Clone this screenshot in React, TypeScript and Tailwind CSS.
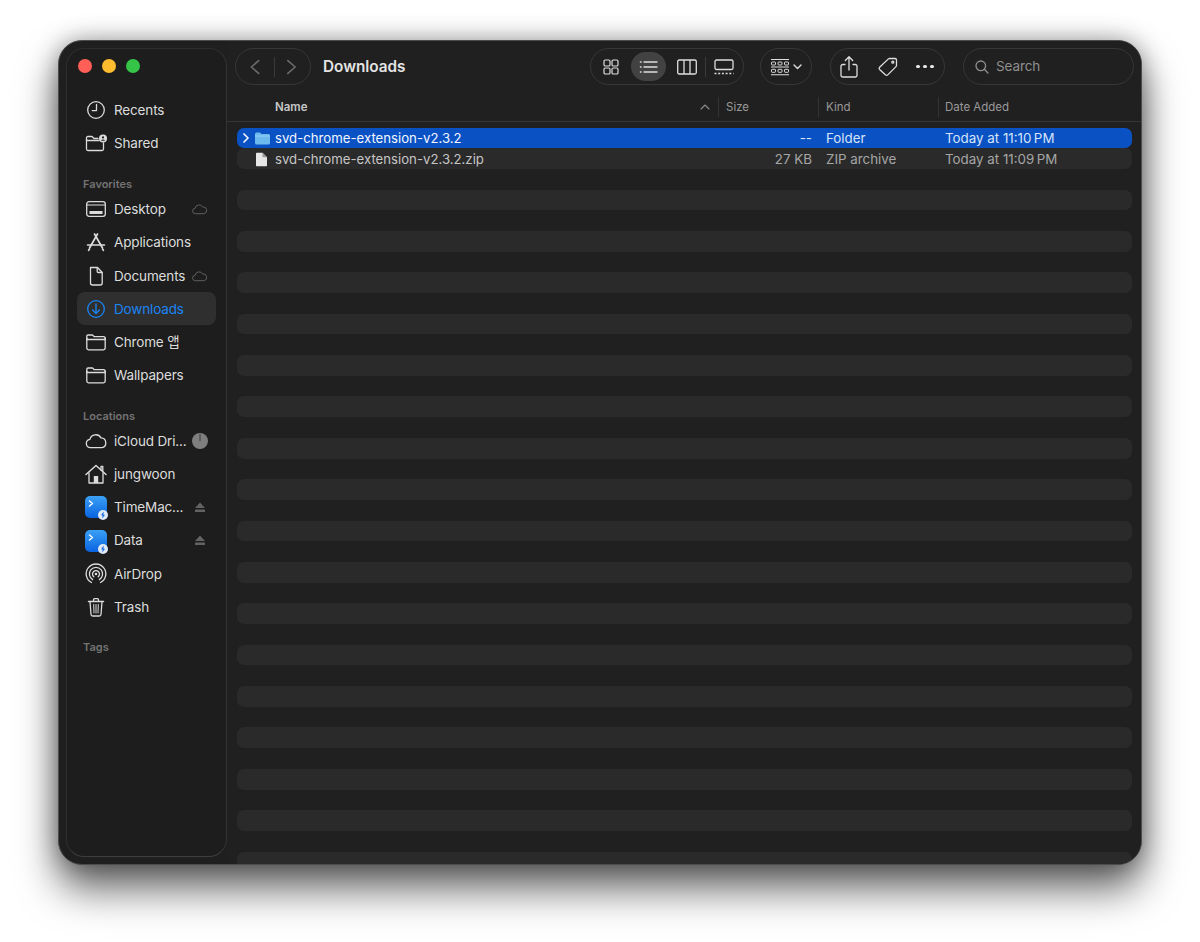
import type { ReactNode } from 'react';

const stroke = { fill: 'none', stroke: 'currentColor', strokeWidth: 1.3, strokeLinecap: 'round', strokeLinejoin: 'round' } as const;

function Ico({ w = 24, h = 24, children, className }: { w?: number; h?: number; children: ReactNode; className?: string }) {
  return (
    <svg width={w} height={h} viewBox={`0 0 ${w} ${h}`} className={className} {...stroke}>
      {children}
    </svg>
  );
}

// sidebar icons
const Recents = () => (
  <Ico>
    <circle cx="12" cy="12" r="8.3" />
    <path d="M12.5 6.5V12.6H8.2" />
  </Ico>
);
const Shared = () => (
  <Ico>
    <path d="M2.5 8.5V18a1.5 1.5 0 0 0 1.5 1.5h14a1.5 1.5 0 0 0 1.5-1.5v-6" />
    <path d="M2.5 9V6.8A1.3 1.3 0 0 1 3.8 5.5H8l2 2h4" />
    <path d="M2.5 9.5H15" />
    <circle cx="19" cy="7.5" r="4" fill="currentColor" stroke="none" />
    <circle cx="19" cy="6.4" r="1.1" fill="#1e1e1e" stroke="none" />
    <path d="M16.9 9.8a2.4 2.4 0 0 1 4.2 0z" fill="#1e1e1e" stroke="none" />
  </Ico>
);
const Desktop = () => (
  <Ico>
    <rect x="2.7" y="4.7" width="18.6" height="14.6" rx="2.4" />
    <rect x="5.5" y="14" width="13" height="3" fill="currentColor" stroke="none" />
    <path d="M3 8h18" strokeWidth="1" />
  </Ico>
);
const Applications = () => (
  <Ico>
    <path d="M10.500 4l8 14M13.500 4L5.500 18" strokeWidth="1.700" />
    <path d="M3.500 15h17" strokeWidth="1.500" />
    <path d="M4.500 20.500l1-1.500M19.500 20.500l-1-1.500" strokeWidth="1.500" />
  </Ico>
);
const Documents = () => (
  <Ico>
    <path d="M6.500 3.500h7l4.700 5V19a2 2 0 0 1-2 2H8.500a2 2 0 0 1-2-2z" />
    <path d="M13.200 3.700V7.500a1 1 0 0 0 1 1h3.800" />
  </Ico>
);
const Downloads = () => (
  <Ico>
    <circle cx="12" cy="12" r="8.300" />
    <path d="M12 7v9.500M8.600 13l3.400 3.500 3.400-3.500" />
  </Ico>
);
const Folder = () => (
  <Ico>
    <path d="M2.800 8v10a1.800 1.800 0 0 0 1.800 1.800h14.800a1.800 1.800 0 0 0 1.800-1.800V8" />
    <path d="M2.800 9.500V6.300A1.300 1.300 0 0 1 4.100 5h4.400l1.800 1.700h9.100a1.800 1.800 0 0 1 1.800 1.800v1z" />
  </Ico>
);
const CloudBig = () => (
  <Ico>
    <path d="M6.500 18.700a4.200 4.200 0 0 1-.6-8.350A6 6 0 0 1 17 8.900a4.950 4.950 0 0 1 .8 9.800z" />
  </Ico>
);
const Home = () => (
  <Ico>
    <path d="M2 12.500L12 3.500l10 9" strokeWidth="1.500" />
    <path d="M17 8V4.500h1.800v5" />
    <path d="M5 10.800V21h14V10.800" />
    <rect x="9.800" y="14" width="4.400" height="7" fill="currentColor" stroke="none" />
  </Ico>
);
const Volume = () => (
  <span className="relative flex h-[22px] w-[22px] rounded-[5px] bg-gradient-to-b from-[#3ba0f5] to-[#0a62e0]">
    <svg width="22" height="22" viewBox="0 0 22 22" className="text-white" fill="none" stroke="currentColor" strokeWidth="1.400" strokeLinecap="round" strokeLinejoin="round">
      <path d="M4.500 5l3 2.500-3 2.500" />
    </svg>
    <span className="absolute -bottom-[2px] -right-[1px] flex h-[10px] w-[10px] items-center justify-center rounded-full bg-[#dfe9f7]">
      <svg width="8" height="8" viewBox="0 0 8 8"><path d="M4.800 0.500L2 4.300h1.700L3.200 7.500 6 3.700H4.300z" fill="#0a62e0" /></svg>
    </span>
  </span>
);
const AirDrop = () => (
  <Ico>
    <path d="M7.500 20.500a9.800 9.800 0 1 1 9 0" />
    <path d="M8.600 17.600a6.600 6.600 0 1 1 6.800 0" />
    <path d="M9.800 14.800a3.500 3.500 0 1 1 4.400 0" />
    <circle cx="12" cy="12" r="1.300" fill="currentColor" stroke="none" />
  </Ico>
);
const Trash = () => (
  <Ico>
    <path d="M4.500 6.500h15" strokeWidth="1.500" />
    <path d="M9.500 6V4.700a1 1 0 0 1 1-1h3a1 1 0 0 1 1 1V6" />
    <path d="M6 6.500l1 13a1.700 1.700 0 0 0 1.700 1.500h6.600a1.700 1.700 0 0 0 1.700-1.500l1-13" />
    <path d="M9.700 9.500l.3 8.500M12 9.500V18M14.300 9.500L14 18" strokeWidth="1" />
  </Ico>
);
const SmallCloud = () => (
  <svg width="17" height="12" viewBox="0 0 17 12" fill="none" stroke="#636363" strokeWidth="1">
    <path d="M3.700 11a2.900 2.900 0 0 1-.3-5.800A4.200 4.200 0 0 1 11.300 3.900 3.600 3.600 0 0 1 12.700 11z" />
  </svg>
);
const Eject = () => (
  <svg width="12" height="11" viewBox="0 0 12 11" fill="#636363">
    <path d="M6 0.500L11 6H1z" />
    <rect x="1" y="7.500" width="10" height="2.500" rx="0.500" />
  </svg>
);
const Pie = () => (
  <span className="flex h-4 w-4 rounded-full bg-[#7f7f7f]">
    <svg width="16" height="16" viewBox="0 0 16 16"><path d="M8 1v7" stroke="#3c3c3c" strokeWidth="1" /></svg>
  </span>
);

type Item = { label: string; icon: ReactNode; extra?: ReactNode; active?: boolean };

const top: Item[] = [
  { label: 'Recents', icon: <Recents /> },
  { label: 'Shared', icon: <Shared /> },
];
const favorites: Item[] = [
  { label: 'Desktop', icon: <Desktop />, extra: <SmallCloud /> },
  { label: 'Applications', icon: <Applications /> },
  { label: 'Documents', icon: <Documents />, extra: <SmallCloud /> },
  { label: 'Downloads', icon: <Downloads />, active: true },
  { label: 'Chrome 앱', icon: <Folder /> },
  { label: 'Wallpapers', icon: <Folder /> },
];
const locations: Item[] = [
  { label: 'iCloud Dri...', icon: <CloudBig />, extra: <Pie /> },
  { label: 'jungwoon', icon: <Home /> },
  { label: 'TimeMac...', icon: <Volume />, extra: <Eject /> },
  { label: 'Data', icon: <Volume />, extra: <Eject /> },
  { label: 'AirDrop', icon: <AirDrop /> },
  { label: 'Trash', icon: <Trash /> },
];

function NavRow({ label, icon, extra, active }: Item) {
  return (
    <div className={`mx-[10px] flex h-[33.150px] items-center rounded-lg pl-[7px] pr-[8px] ${active ? 'bg-[#2f2f2f] text-[#1a85f5]' : 'text-[#dcdcdc]'}`}>
      <span className="flex w-6 justify-center">{icon}</span>
      <span className="ml-[6px] whitespace-nowrap text-[13.500px] tracking-[-0.150px]">{label}</span>
      {extra && <span className="ml-auto flex w-4 justify-center">{extra}</span>}
    </div>
  );
}

function NavHeading({ children }: { children: ReactNode }) {
  return <div className="flex h-[33px] items-end pb-[1px] pl-4 text-[11px] leading-4 font-semibold text-[#737373]">{children}</div>;
}

function Sidebar() {
  return (
    <aside className="m-[7px] mr-0 w-[161px] shrink-0 rounded-[18px] border border-[#2e2e2e] border-r-[#333] border-b-[#3e3e3e] bg-[#1d1d1d]">
      <div className="mb-[10.500px] flex h-[34px] items-center gap-[10px] pl-[11px]">
        <span className="h-[14px] w-[14px] rounded-full bg-[#ff5f57]" />
        <span className="h-[14px] w-[14px] rounded-full bg-[#febc2e]" />
        <span className="h-[14px] w-[14px] rounded-full bg-[#35c348]" />
      </div>
      {top.map((i) => <NavRow key={i.label} {...i} />)}
      <NavHeading>Favorites</NavHeading>
      {favorites.map((i) => <NavRow key={i.label} {...i} />)}
      <NavHeading>Locations</NavHeading>
      {locations.map((i) => <NavRow key={i.label} {...i} />)}
      <NavHeading>Tags</NavHeading>
    </aside>
  );
}

const pill = 'flex h-[37px] items-center rounded-full border border-[#373737]';

function Toolbar() {
  return (
    <div className="flex h-[51px] shrink-0 items-start pt-[7px] pl-2 pr-[7px] text-[#dedede]">
      <div className={`${pill} w-[76px] text-[#6c6c6c]`}>
        <svg width="38" height="20" viewBox="0 0 38 20" {...stroke} strokeWidth={1.600}><path d="M23 3.500L15.500 10 23 16.500" /></svg>
        <span className="h-[20px] w-px bg-[#3a3a3a]" />
        <svg width="36" height="20" viewBox="0 0 36 20" {...stroke} strokeWidth={1.600}><path d="M14 3.500L21.500 10 14 16.500" /></svg>
      </div>
      <h1 className="ml-3 text-[15.300px] leading-[37px] font-semibold text-[#e4e4e4]">Downloads</h1>
      <div className="flex-1" />
      {/* view switcher */}
      <div className={`${pill} w-[154px] pl-[10px]`}>
        <svg width="20" height="18" viewBox="0 0 20 18" fill="none" stroke="currentColor" strokeWidth="1.200">
          <rect x="3" y="2" width="6" height="6" rx="1.300" /><rect x="11" y="2" width="6" height="6" rx="1.300" />
          <rect x="3" y="10" width="6" height="6" rx="1.300" /><rect x="11" y="10" width="6" height="6" rx="1.300" />
        </svg>
        <span className="ml-[10px] flex h-[29px] w-[35px] items-center justify-center rounded-full bg-[#424242]">
          <svg width="20" height="16" viewBox="0 0 20 16" fill="none" stroke="currentColor" strokeWidth="1.300" strokeLinecap="round">
            <path d="M5 3h13M5 8h13M5 13h13" />
            <path d="M1.500 3h.5M1.500 8h.5M1.500 13h.5" strokeWidth="1.600" />
          </svg>
        </span>
        <svg className="ml-[10.500px]" width="20" height="16" viewBox="0 0 20 16" fill="none" stroke="currentColor" strokeWidth="1.300">
          <rect x="0.700" y="1" width="18.600" height="14" rx="1.500" /><path d="M7 1v14M13 1v14" />
        </svg>
        <span className="ml-[8px] h-[20px] w-px bg-[#3a3a3a]" />
        <svg className="ml-[8px]" width="20" height="16" viewBox="0 0 20 16" fill="none" stroke="currentColor" strokeWidth="1.300">
          <rect x="1" y="1" width="18" height="9.500" rx="1.500" />
          <path d="M0.500 14.500h19" strokeDasharray="2 1.700" strokeWidth="1.500" />
        </svg>
      </div>
      {/* group by */}
      <div className={`${pill} ml-4 w-[52px] justify-center gap-[3px]`}>
        <svg width="20" height="18" viewBox="0 0 20 18" fill="none" stroke="currentColor" strokeWidth="1">
          <path d="M1 1.500h18M1 9h18M1 16.800h18" strokeWidth="1.100" />
          <rect x="1.500" y="4" width="4" height="3" rx="0.700" /><rect x="8" y="4" width="4" height="3" rx="0.700" /><rect x="14.500" y="4" width="4" height="3" rx="0.700" />
          <rect x="1.500" y="11.300" width="4" height="3" rx="0.700" /><rect x="8" y="11.300" width="4" height="3" rx="0.700" /><rect x="14.500" y="11.300" width="4" height="3" rx="0.700" />
        </svg>
        <svg width="9" height="6" viewBox="0 0 9 6" {...stroke} strokeWidth={1.400}><path d="M1 1l3.500 3.500L8 1" /></svg>
      </div>
      {/* actions */}
      <div className={`${pill} ml-[18px] w-[115px] pl-[8px]`}>
        <svg width="20" height="24" viewBox="0 0 20 24" {...stroke} strokeWidth={1.300}>
          <path d="M6 9.500H3.800A1.800 1.800 0 0 0 2 11.300v8.900A1.800 1.800 0 0 0 3.800 22h12.400a1.800 1.800 0 0 0 1.800-1.800v-8.900a1.800 1.800 0 0 0-1.800-1.800H14" />
          <path d="M10 15V2M6.300 5.500L10 1.800l3.700 3.700" />
        </svg>
        <svg className="ml-[18px]" width="22" height="22" viewBox="0 0 22 22" {...stroke}>
          <path d="M12.500 2.500h5.500a1.500 1.500 0 0 1 1.500 1.500v5.500a1.500 1.500 0 0 1-.5 1.100l-8.300 8.300a1.500 1.500 0 0 1-2.100 0L2.600 13.400a1.500 1.500 0 0 1 0-2.100l8.800-8.400a1.500 1.500 0 0 1 1.100-.4z" />
          <circle cx="15.800" cy="6.200" r="1" />
        </svg>
        <span className="ml-[17px] flex gap-[3.500px]">
          <span className="h-[3.500px] w-[3.500px] rounded-full bg-[#e6e6e6]" />
          <span className="h-[3.500px] w-[3.500px] rounded-full bg-[#e6e6e6]" />
          <span className="h-[3.500px] w-[3.500px] rounded-full bg-[#e6e6e6]" />
        </span>
      </div>
      {/* search */}
      <div className={`${pill} ml-[18px] w-[171px] pl-[11px] text-[#8f8f8f]`}>
        <svg width="14" height="14" viewBox="0 0 14 14" {...stroke}>
          <circle cx="5.800" cy="5.800" r="4.800" /><path d="M9.300 9.300L13 13" />
        </svg>
        <span className="ml-[7px] text-[13.500px] tracking-[-0.100px]">Search</span>
      </div>
    </div>
  );
}

function ColumnHeader() {
  return (
    <div className="grid h-[30px] shrink-0 grid-cols-[491px_100px_120px_1fr] items-center border-b border-[#363636] text-[11.500px] leading-[20px] text-[#9a9a9a]">
      <div className="flex h-[20px] items-center justify-between pl-[48px] pr-[8px] pt-[1px] font-semibold text-[#c8c8c8]">
        Name
        <svg width="10" height="6" viewBox="0 0 10 6" fill="none" stroke="#8a8a8a" strokeWidth="1.100" strokeLinecap="round" strokeLinejoin="round"><path d="M1 5l4-4 4 4" /></svg>
      </div>
      <div className="h-[20px] border-l border-[#333] pl-[7px]">Size</div>
      <div className="h-[20px] border-l border-[#333] pl-[7px]">Kind</div>
      <div className="h-[20px] border-l border-[#333] pl-[6px]">Date Added</div>
    </div>
  );
}

const cols = 'grid grid-cols-[481px_100px_120px_1fr] items-center h-[20.700px] rounded-[7px] pt-[1px] text-[13.350px] leading-[19px]';

function FileRows() {
  return (
    <div className="ml-[10px] mr-[9px] mt-[5.500px] flex flex-col">
      <div className={`${cols} bg-[#0a52c4] text-[#d6e4fa]`}>
        <div className="flex items-center text-[13.200px] text-[#f2f6fe]">
          <svg className="ml-[5px]" width="8" height="10" viewBox="0 0 8 10" fill="none" stroke="currentColor" strokeWidth="1.700" strokeLinecap="round" strokeLinejoin="round"><path d="M2 1l4 4-4 4" /></svg>
          <svg className="ml-[4px]" width="17" height="14" viewBox="0 0 17 14"><path d="M1 3a1.500 1.500 0 0 1 1.500-1.500h3.500l1.500 1.500h7a1.500 1.500 0 0 1 1.500 1.500V12a1.500 1.500 0 0 1-1.500 1.500h-12A1.500 1.500 0 0 1 1 12z" fill="#6cb9ee" /><path d="M1 5h15" stroke="#a2d4f5" strokeWidth="0.800" /></svg>
          <span className="ml-[4px] whitespace-nowrap">svd-chrome-extension-v2.3.2</span>
        </div>
        <div className="pr-[6px] text-right">--</div>
        <div className="pl-2">Folder</div>
        <div className="pl-[7px]">Today at 11:10&#8201;PM</div>
      </div>
      <div className={`${cols} bg-[#2a2a2a] text-[#a6a6a6]`}>
        <div className="flex items-center text-[13.200px] text-[#c6c6c6]">
          <svg className="ml-[18px]" width="13" height="15" viewBox="0 0 13 15"><path d="M1 1.500A.8.800 0 0 1 1.800.700h5.700l4.500 4.500v8.300a.8.800 0 0 1-.8.800H1.800a.8.800 0 0 1-.8-.8z" fill="#e6e6e6" /><path d="M7.500.700V5.200H12" fill="#9a9a9a" /></svg>
          <span className="ml-[7px] whitespace-nowrap">svd-chrome-extension-v2.3.2.zip</span>
        </div>
        <div className="pr-[6px] text-right">27 KB</div>
        <div className="pl-2">ZIP archive</div>
        <div className="pl-[7px]">Today at 11:09&#8201;PM</div>
      </div>
      {Array.from({ length: 17 }, (_, i) => (
        <div key={i} className="mt-[20.700px] h-[20.700px] shrink-0 rounded-[7px] bg-[#2a2a2a]" />
      ))}
    </div>
  );
}

export default function App() {
  return (
    <div className="h-[942px] w-[1200px] overflow-hidden bg-white px-[58px] pt-10 [font-family:Inter,'Noto_Sans_CJK_KR',sans-serif]">
      <div className="flex h-[825px] overflow-hidden rounded-[24px] border border-[#4c4c4c] bg-[#1f1f1f] shadow-[0_24px_40px_rgba(0,0,0,0.6),0_0_24px_rgba(0,0,0,0.35)]">
        <Sidebar />
        <main className="flex min-w-0 flex-1 flex-col overflow-hidden bg-[#202020]">
          <Toolbar />
          <ColumnHeader />
          <FileRows />
        </main>
      </div>
    </div>
  );
}
